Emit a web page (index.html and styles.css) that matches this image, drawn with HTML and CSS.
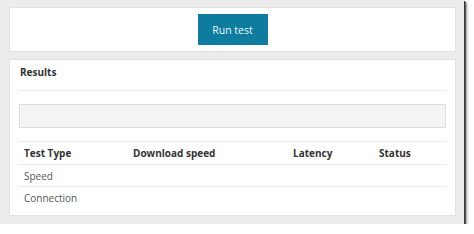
FILE: index.html
```html
<!DOCTYPE html>
<html>
<head>
  <title>Network test</title>
  <meta charset="UTF-8">
  <link rel="stylesheet" href="styles.css">
</head>
<body>
  <div class="frame">
    <!-- Toolbar -->
    <div class="card card-toolbar">
      <button class="btn btn-primary">Run test</button>
    </div>

    <!-- Results -->
    <div class="card card-results">
      <div class="card-title">Results</div>
      <div class="progress-box"></div>
      <table class="results-table">
        <thead>
          <tr>
            <th class="col-type">Test Type</th>
            <th class="col-speed">Download speed</th>
            <th class="col-latency">Latency</th>
            <th class="col-status">Status</th>
          </tr>
        </thead>
        <tbody>
          <tr><td>Speed</td><td></td><td></td><td></td></tr>
          <tr><td>Connection</td><td></td><td></td><td></td></tr>
        </tbody>
      </table>
    </div>
  </div>
</body>
</html>
```

FILE: styles.css
```css
:root {
  --primary-color: #0e7c9e;
  --text-color: #333;
  --muted-text: #555;
  --border-color: #e2e2e2;
  --line-color: #ececec;
  --frame-bg: #ececec;
  --white: #fff;
}
body {
  margin: 0;
  background-color: var(--white);
  font-family: "Open Sans", "Noto Sans", Arial, sans-serif;
  font-size: 10px;
  color: var(--text-color);
}
.frame {
  width: 464px;
  height: 224px;
  box-sizing: border-box;
  padding: 7px 8px 0 9px;
  background-color: var(--frame-bg);
  box-shadow: 1px 1px 0 #3a3a3a, 2px 2px 1px #555, 3px 3px 3px rgba(0, 0, 0, 0.35);
}
.card { background-color: var(--white); border: 1px solid var(--border-color); box-sizing: border-box; }
.card-toolbar { height: 45px; display: flex; align-items: center; justify-content: center; margin-bottom: 7px; }
.btn { border: none; font-family: inherit; cursor: pointer; }
.btn-primary { width: 70px; height: 31px; background-color: var(--primary-color); color: #e8f6fb; font-size: 10.5px; }
.card-results { height: 157px; padding: 5px 9px 0 9px; }
.card-title { font-weight: 700; font-size: 10px; line-height: 14px; padding-bottom: 11px; border-bottom: 1px solid var(--line-color); padding-left: 1px; }
.progress-box { height: 24px; margin-top: 13px; margin-bottom: 13px; background-color: #f4f4f4; border: 1px solid #dedede; box-sizing: border-box; }
.results-table { width: 100%; border-collapse: collapse; table-layout: fixed; }
.results-table th, .results-table td { text-align: left; padding: 0 5px; border-top: 1px solid var(--line-color); }
.results-table th { height: 22px; font-weight: 700; color: var(--text-color); }
.results-table td { height: 21px; color: var(--muted-text); }
.col-type { width: 99px; }
.col-speed { width: 150px; }
.col-latency { width: 76px; }
```
